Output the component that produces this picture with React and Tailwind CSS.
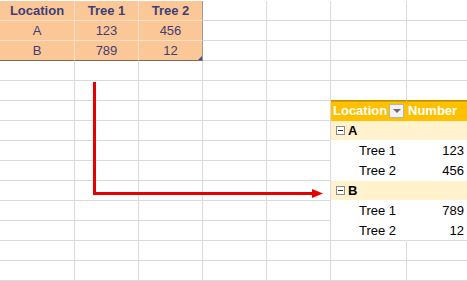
import React from "react";

const COLS = 7;
const ROWS = 14;

function MinusBox() {
  return (
    <span className="inline-flex items-center justify-center w-[9px] h-[9px] border border-[#8C8C8C] bg-white mr-[3px]">
      <span className="block w-[5px] h-[1px] bg-[#333333]" />
    </span>
  );
}

function cell(r, c) {
  // top input table
  if (r <= 2 && c <= 2) {
    const head = r === 0;
    const txt = [["Location", "Tree 1", "Tree 2"], ["A", "123", "456"], ["B", "789", "12"]][r][c];
    let cls = "flex items-center justify-center bg-[#FBC797] text-[#3F3F76] border-b border-r ";
    cls += r === 2 ? "border-b-[#7F6A58] " : "border-b-[#FCE1C9] ";
    cls += c === 2 ? "border-r-[#9A9A9A] " : "border-r-[#FCE1C9] ";
    cls += head ? "font-bold" : "";
    return (
      <div key={`${r}-${c}`} className={cls + " relative"}>
        {txt}
        {r === 2 && c === 2 && (
          <span className="absolute right-[0px] bottom-[0px] w-0 h-0 border-l-[4px] border-l-transparent border-b-[4px] border-b-[#3C4FA0]" />
        )}
      </div>
    );
  }
  if (r === 4 && (c === 5 || c === 6)) {
    return <div key={`${r}-${c}`} className="border-b border-r border-b-[#BF8F00] border-r-[#DADADA]" />;
  }
  if (r === 5 && c === 5) {
    return (
      <div key={`${r}-${c}`} className="flex items-center justify-between bg-[#FFC000] border-b border-r border-[#FFC000] text-white font-bold pl-[2px] shadow-[inset_0_1px_0_#D9A400]">
        <span>Location</span>
        <span className="flex items-center justify-center w-[15px] h-[14px] mr-[2px] bg-[#F2F2F2] border border-[#B4B4B4]">
          <span className="w-0 h-0 border-l-[4px] border-r-[4px] border-t-[4px] border-l-transparent border-r-transparent border-t-[#6E6E6E]" />
        </span>
      </div>
    );
  }
  if (r === 5 && c === 6) {
    return (
      <div key={`${r}-${c}`} className="flex items-center bg-[#FFC000] border-b border-r border-[#FFC000] text-white font-bold pl-[1px] shadow-[inset_0_1px_0_#D9A400]">
        Number
      </div>
    );
  }
  if ((r === 6 || r === 9) && c === 5) {
    return (
      <div key={`${r}-${c}`} className="flex items-center bg-[#FFF2CC] border-b border-r border-b-white border-r-[#FFF2CC] font-bold text-black pl-[5px]">
        <MinusBox />
        {r === 6 ? "A" : "B"}
      </div>
    );
  }
  if ((r === 6 || r === 9) && c === 6) {
    return <div key={`${r}-${c}`} className="bg-[#FFF2CC] border-b border-r border-b-white border-r-[#FFF2CC]" />;
  }
  if ([7, 8, 10, 11].includes(r) && (c === 5 || c === 6)) {
    const name = r === 7 || r === 10 ? "Tree 1" : "Tree 2";
    const val = { 7: "123", 8: "456", 10: "789", 11: "12" }[r];
    const last = r === 11;
    if (c === 5) {
      return (
        <div key={`${r}-${c}`} className={last ? "flex items-center text-black pl-[28px] border-b border-r border-b-[#DADADA] border-r-white" : "flex items-center text-black pl-[28px] border-b border-r border-white"}>
          {name}
        </div>
      );
    }
    return (
      <div key={`${r}-${c}`} className={last ? "flex items-center justify-end text-black pr-[3px] border-b border-r border-[#DADADA]" : "flex items-center justify-end text-black pr-[3px] border-b border-r border-b-white border-r-[#DADADA]"}>
        {val}
      </div>
    );
  }
  return <div key={`${r}-${c}`} className="border-b border-r border-[#DADADA]" />;
}

export default function App() {
  const cells = [];
  for (let r = 0; r < ROWS; r++) for (let c = 0; c < COLS; c++) cells.push(cell(r, c));
  return (
    <div className="relative w-[467px] h-[281px] overflow-hidden bg-white">
      <div
        className="grid grid-cols-[75px_64px_64px_64px_64px_76px_61px] auto-rows-[20px] w-[468px] pt-[1px] text-[13px] leading-none"
        style={{ fontFamily: '"Liberation Sans", Arial, sans-serif' }}
      >
        {cells}
      </div>
      <svg className="absolute left-0 top-0 pointer-events-none" width="467" height="281" viewBox="0 0 467 281">
        <polyline points="94.5,82 94.5,193.5 314,193.5" fill="none" stroke="#E60000" strokeWidth="3" />
        <polygon points="312,189 323,193.5 312,198" fill="#E60000" />
      </svg>
    </div>
  );
}
